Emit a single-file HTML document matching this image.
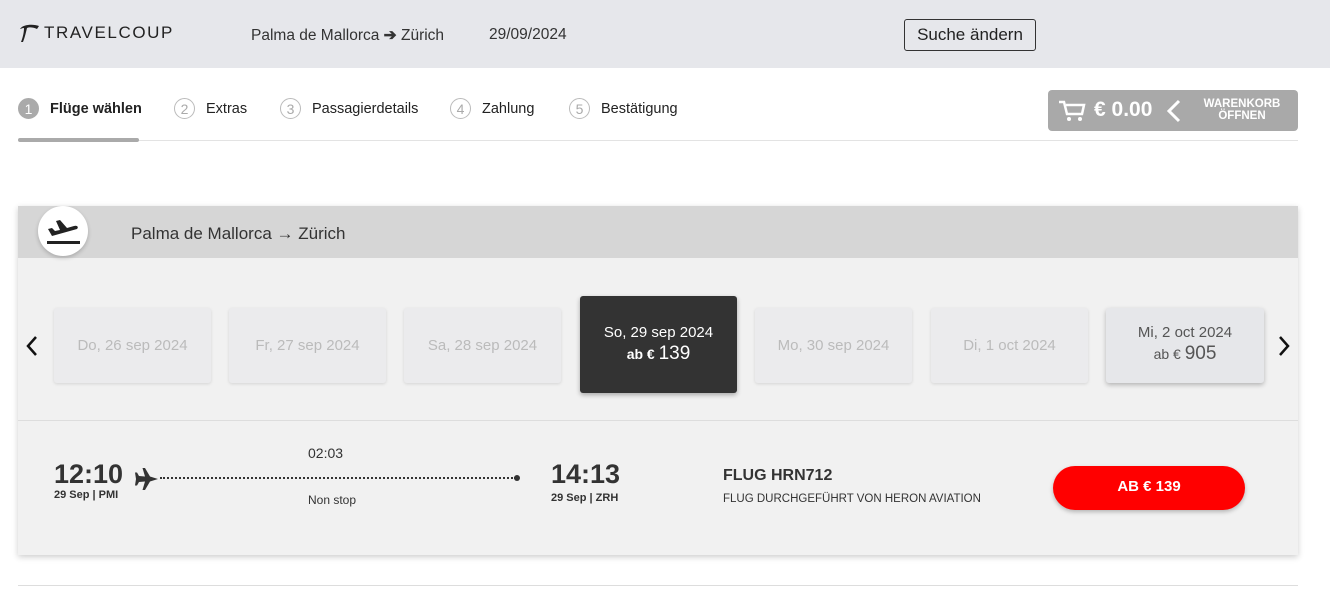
<!DOCTYPE html><html><head><meta charset="utf-8"><style>
body{margin:0;width:1330px;height:610px;background:#fff;font-family:"Liberation Sans",sans-serif;color:#333;position:relative;overflow:hidden}
.a{position:absolute}
.hdr{left:0;top:0;width:1330px;height:68px;background:#e6e7eb}
.step{top:98px;font-size:14.5px;color:#222;display:flex;align-items:center}
.num{width:21px;height:21px;border:1.5px solid #bbb;border-radius:50%;font-size:14px;color:#aaa;display:inline-flex;align-items:center;justify-content:center;margin-right:11px;box-sizing:border-box}
.dc{top:308px;width:157px;height:75px;background:#ebebed;border-radius:3px;box-shadow:0 1px 3px rgba(0,0,0,.12);color:#bbb;font-size:15px;text-align:center;line-height:75px}
</style></head><body>
<div class="a hdr"></div>
<div class="a" style="left:18px;top:23px;display:flex;align-items:center;font-size:17px;letter-spacing:1.6px;color:#222">
<svg width="22" height="20" viewBox="0 0 22 20"><path d="M2 6C5 1 16 1 21 3L19 6C15 4 11 4 9 5C8 9 7 14 5 19L3 19C5 14 6 9 6 5C4 5 3 6 2 6Z" fill="#222"/></svg><span style="margin-left:4px">TRAVELCOUP</span></div>
<div class="a" style="left:251px;top:26px;font-size:15.5px">Palma de Mallorca <b>➔</b> Zürich</div>
<div class="a" style="left:489px;top:26px;font-size:15.5px">29/09/2024</div>
<div class="a" style="left:904px;top:19px;width:130px;height:30px;border:1px solid #333;border-radius:3px;font-size:17px;line-height:30px;text-align:center;color:#222">Suche ändern</div>

<div class="a step" style="left:18px"><span class="num" style="background:#aaa;border-color:#aaa;color:#fff">1</span><b>Flüge wählen</b></div>
<div class="a step" style="left:174px"><span class="num">2</span>Extras</div>
<div class="a step" style="left:280px"><span class="num">3</span>Passagierdetails</div>
<div class="a step" style="left:450px"><span class="num">4</span>Zahlung</div>
<div class="a step" style="left:569px"><span class="num">5</span>Bestätigung</div>
<div class="a" style="left:18px;top:140px;width:1280px;height:1px;background:#e3e3e3"></div>
<div class="a" style="left:18px;top:138px;width:121px;height:4px;background:#aaa;border-radius:2px"></div>

<div class="a" style="left:1048px;top:90px;width:250px;height:41px;background:#a9a9a9;border-radius:4px;color:#fff">
<svg class="a" style="left:10px;top:9px" width="28" height="24" viewBox="0 0 28 24"><path d="M1 3H6L9 15H24L26 6H8" stroke="#fff" stroke-width="2.5" fill="none"/><circle cx="11" cy="20" r="2" fill="#fff"/><circle cx="22" cy="20" r="2" fill="#fff"/></svg>
<div class="a" style="left:46px;top:8px;font-size:21px;font-weight:bold">€ 0.00</div>
<svg class="a" style="left:118px;top:9px" width="16" height="24"><path d="M13 2L3 12L13 22" stroke="#fff" stroke-width="3" fill="none"/></svg>
<div class="a" style="left:146px;top:8px;width:96px;font-size:11.5px;font-weight:bold;text-align:center;line-height:12px">WARENKORB<br>ÖFFNEN</div></div>

<div class="a" style="left:18px;top:206px;width:1280px;height:349px;background:#f1f1f1;box-shadow:0 2px 6px rgba(0,0,0,.2)"></div>
<div class="a" style="left:18px;top:206px;width:1280px;height:52px;background:#d6d6d6"></div>
<div class="a" style="left:38px;top:206px;width:50px;height:50px;border-radius:50%;background:#fff;box-shadow:0 2px 4px rgba(0,0,0,.2)">
<svg class="a" style="left:8px;top:10px" width="34" height="30" viewBox="0 0 34 30"><path d="M2 13L6 12L9 15L14 14L10 5L14 4L21 12L28 10C31 9 33 11 31 13L6 20Z" fill="#222"/><rect x="1" y="25" width="34" height="3" fill="#222"/></svg></div>
<div class="a" style="left:131px;top:224px;font-size:17px;color:#333">Palma de Mallorca → Zürich</div>

<svg class="a" style="left:25px;top:335px" width="14" height="22"><path d="M11 2L3 11L11 20" stroke="#111" stroke-width="2.5" fill="none"/></svg>
<svg class="a" style="left:1277px;top:335px" width="14" height="22"><path d="M3 2L11 11L3 20" stroke="#111" stroke-width="2.5" fill="none"/></svg>
<div class="a dc" style="left:54px">Do, 26 sep 2024</div>
<div class="a dc" style="left:229px">Fr, 27 sep 2024</div>
<div class="a dc" style="left:404px">Sa, 28 sep 2024</div>
<div class="a" style="left:580px;top:296px;width:157px;height:97px;background:#333;border-radius:3px;color:#fff;text-align:center;box-shadow:0 2px 5px rgba(0,0,0,.3)"><div style="margin-top:28px;font-size:15px">So, 29 sep 2024</div><div style="font-size:14px;font-weight:bold;margin-top:2px">ab € <span style="font-size:19px;font-weight:normal">139</span></div></div>
<div class="a dc" style="left:755px">Mo, 30 sep 2024</div>
<div class="a dc" style="left:931px">Di, 1 oct 2024</div>
<div class="a dc" style="left:1106px;width:158px;background:#e6e7ea;color:#555;line-height:normal;box-shadow:0 2px 5px rgba(0,0,0,.25)"><div style="margin-top:16px">Mi, 2 oct 2024</div><div style="font-size:14px;margin-top:2px">ab € <span style="font-size:19px">905</span></div></div>
<div class="a" style="left:18px;top:420px;width:1280px;height:1px;background:#ddd"></div>

<div class="a" style="left:54px;top:459px;font-size:27px;font-weight:bold;color:#333">12:10</div>
<div class="a" style="left:54px;top:489px;font-size:11px;font-weight:bold">29 Sep | PMI</div>
<svg class="a" style="left:134px;top:467px" width="26" height="24" viewBox="0 0 26 24"><path d="M24 12L16 9.5L11 1H8.5L11 9.5L5 9L3 5.5H1L2 12L1 18.5H3L5 15L11 14.5L8.5 23H11L16 14.5Z" fill="#333"/></svg>
<div class="a" style="left:160px;top:477px;width:356px;border-top:2px dotted #333"></div>
<div class="a" style="left:514px;top:475px;width:6px;height:6px;border-radius:50%;background:#333"></div>
<div class="a" style="left:308px;top:445px;font-size:14px">02:03</div>
<div class="a" style="left:308px;top:493px;font-size:12px">Non stop</div>
<div class="a" style="left:551px;top:459px;font-size:27px;font-weight:bold">14:13</div>
<div class="a" style="left:551px;top:492px;font-size:11px;font-weight:bold">29 Sep | ZRH</div>
<div class="a" style="left:723px;top:467px;font-size:16px;font-weight:bold">FLUG HRN712</div>
<div class="a" style="left:723px;top:493px;font-size:11.5px">FLUG DURCHGEFÜHRT VON HERON AVIATION</div>
<div class="a" style="left:1053px;top:466px;width:192px;height:44px;background:#f00;border-radius:22px;color:#fff;font-weight:bold;font-size:15px;text-align:center;line-height:42px;box-shadow:0 2px 4px rgba(0,0,0,.25)">AB € 139</div>
<div class="a" style="left:18px;top:585px;width:1280px;height:1px;background:#ddd"></div>
</body></html>
